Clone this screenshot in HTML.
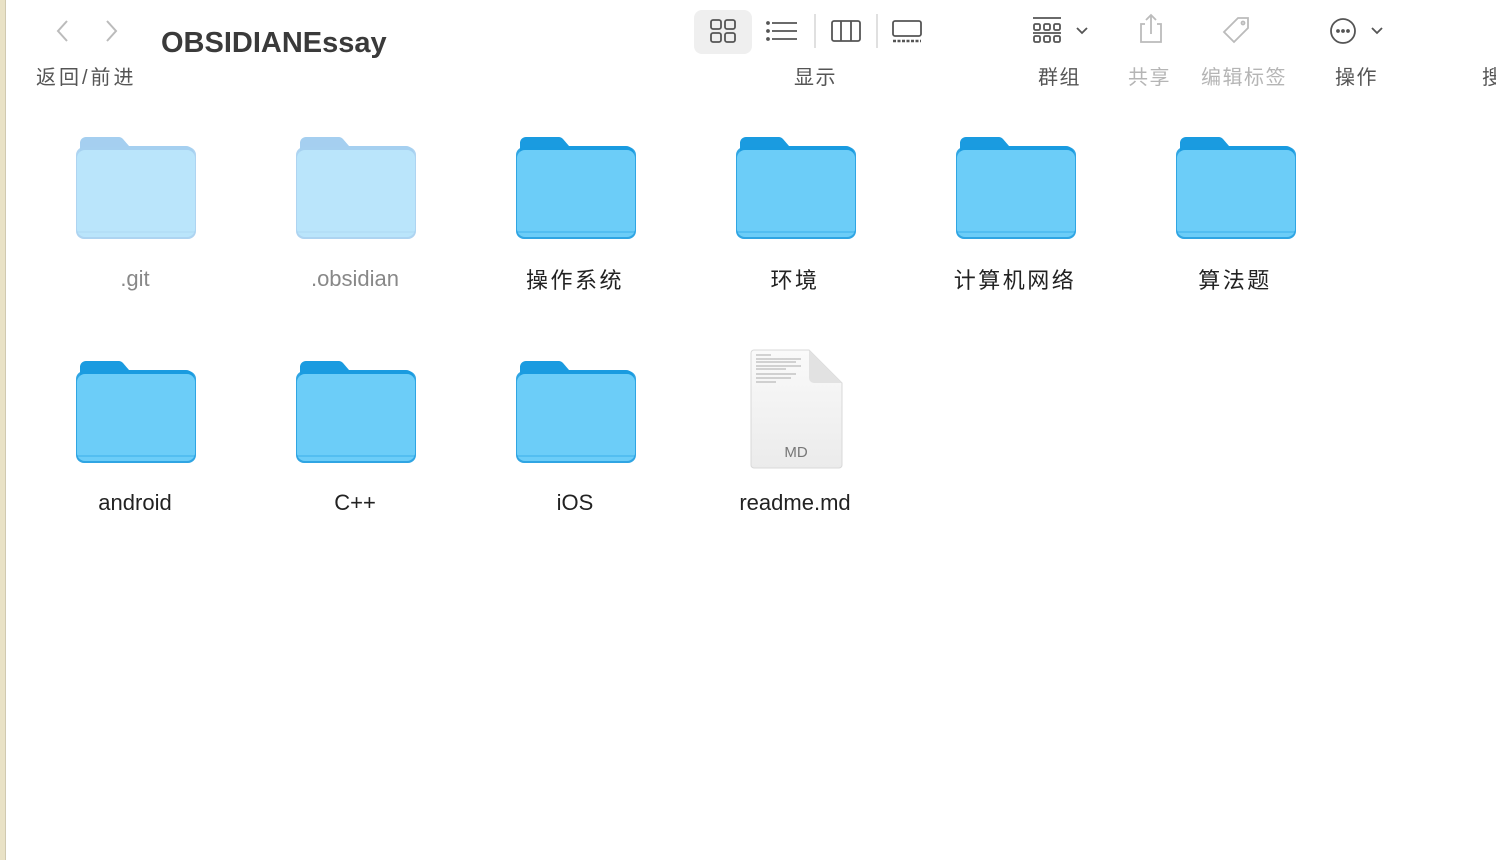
<!DOCTYPE html>
<html><head><meta charset="utf-8"><style>
body{margin:0;width:1496px;height:860px;background:#fff;position:relative;overflow:hidden;font-family:"Liberation Sans","Noto Sans CJK SC",sans-serif;}
.strip{position:absolute;left:0;top:0;width:5px;height:860px;background:#e9e2c6;border-right:1px solid #d0c9b0;}
.t{position:absolute;font-size:20px;color:#555;white-space:nowrap;letter-spacing:1.5px;}
.lbl{position:absolute;width:220px;text-align:center;font-size:22px;color:#222;white-space:nowrap;}
.c{letter-spacing:2.5px;top:263px!important}
.item{position:absolute;}
</style></head><body>
<div class="strip"></div>
<svg style="position:absolute;left:50px;top:18px" width="80" height="26"><path d="M17 3 L8 13 L17 23" fill="none" stroke="#bbb" stroke-width="2"/><path d="M57 3 L66 13 L57 23" fill="none" stroke="#bbb" stroke-width="2"/></svg>
<div class="t" style="left:36px;top:61px;letter-spacing:3px">返回/前进</div>
<div style="position:absolute;left:161px;top:27px;font-size:29px;font-weight:bold;color:#3a3a3a">OBSIDIANEssay</div>
<div style="position:absolute;left:694px;top:10px;width:58px;height:44px;background:#efefef;border-radius:8px"></div>
<svg style="position:absolute;left:690px;top:10px" width="250" height="44" fill="none" stroke="#555" stroke-width="1.8">
<rect x="21" y="10" width="10" height="9" rx="2"/><rect x="35" y="10" width="10" height="9" rx="2"/><rect x="21" y="23" width="10" height="9" rx="2"/><rect x="35" y="23" width="10" height="9" rx="2"/>
<path d="M82 13h25M82 21h25M82 29h25"/><circle cx="78" cy="13" r="1" fill="#555"/><circle cx="78" cy="21" r="1" fill="#555"/><circle cx="78" cy="29" r="1" fill="#555"/>
<path d="M125 4v34" stroke="#ddd"/>
<rect x="142" y="11" width="28" height="20" rx="2"/><path d="M151 11v20M161 11v20"/>
<path d="M187 4v34" stroke="#ddd"/>
<rect x="203" y="11" width="28" height="15" rx="2"/><path d="M203 31h28" stroke-dasharray="3 1.5" stroke-width="2.5"/>
</svg>
<div class="t" style="left:794px;top:61px">显示</div>
<svg style="position:absolute;left:1025px;top:10px" width="380" height="44" fill="none" stroke="#555" stroke-width="1.8">
<path d="M8 8h28"/><rect x="9" y="14" width="6" height="6" rx="1.5"/><rect x="19" y="14" width="6" height="6" rx="1.5"/><rect x="29" y="14" width="6" height="6" rx="1.5"/><path d="M8 23h28"/><rect x="9" y="26" width="6" height="6" rx="1.5"/><rect x="19" y="26" width="6" height="6" rx="1.5"/><rect x="29" y="26" width="6" height="6" rx="1.5"/>
<path d="M52 18l5 5l5-5"/>
<g stroke="#bbb"><path d="M120 14h-4v18h20v-18h-4M126 24v-18M121 10l5-5l5 5"/>
<path d="M213 8h10v10l-14 14l-10-10z"/><circle cx="218" cy="13" r="1.5"/></g>
<circle cx="318" cy="21" r="12"/><circle cx="313" cy="21" r="1" fill="#555"/><circle cx="318" cy="21" r="1" fill="#555"/><circle cx="323" cy="21" r="1" fill="#555"/>
<path d="M347 18l5 5l5-5"/>
<path d="M477 12a10 10 0 0 0 -5 12" stroke="#555"/>
</svg>
<div class="t" style="left:1038px;top:61px">群组</div>
<div class="t" style="left:1128px;top:61px;color:#b5b5b5">共享</div>
<div class="t" style="left:1201px;top:61px;color:#b5b5b5">编辑标签</div>
<div class="t" style="left:1335px;top:61px">操作</div>
<div class="t" style="left:1482px;top:61px">搜索</div>
<svg width="0" height="0" style="position:absolute"><defs>
<symbol id="f" viewBox="0 0 120 102"><path d="M4 6 a6 6 0 0 1 6-6 h32 a6 6 0 0 1 5 2 l6 7 h57 a8 8 0 0 1 8 8 v70 H4z" fill="var(--d)"/><rect x="0" y="10" width="120" height="92" rx="8" fill="var(--d)" opacity="0.9"/><rect x="1" y="13" width="118" height="87" rx="8" fill="var(--m)"/><rect x="1" y="94" width="118" height="2" fill="var(--d)" opacity="0.3"/></symbol></defs></svg>
<svg class="item" style="left:76px;top:137px;--d:#a5cff0;--m:#bae5fb" width="120" height="102"><use href="#f"/></svg>
<svg class="item" style="left:296px;top:137px;--d:#a5cff0;--m:#bae5fb" width="120" height="102"><use href="#f"/></svg>
<svg class="item" style="left:516px;top:137px;--d:#1a9be0;--m:#6ccdf8" width="120" height="102"><use href="#f"/></svg>
<svg class="item" style="left:736px;top:137px;--d:#1a9be0;--m:#6ccdf8" width="120" height="102"><use href="#f"/></svg>
<svg class="item" style="left:956px;top:137px;--d:#1a9be0;--m:#6ccdf8" width="120" height="102"><use href="#f"/></svg>
<svg class="item" style="left:1176px;top:137px;--d:#1a9be0;--m:#6ccdf8" width="120" height="102"><use href="#f"/></svg>
<svg class="item" style="left:76px;top:361px;--d:#1a9be0;--m:#6ccdf8" width="120" height="102"><use href="#f"/></svg>
<svg class="item" style="left:296px;top:361px;--d:#1a9be0;--m:#6ccdf8" width="120" height="102"><use href="#f"/></svg>
<svg class="item" style="left:516px;top:361px;--d:#1a9be0;--m:#6ccdf8" width="120" height="102"><use href="#f"/></svg>
<svg class="item" style="left:746px;top:349px" width="100" height="122">
<defs><linearGradient id="g" x1="0" y1="0" x2="0" y2="1"><stop offset="0" stop-color="#fafafa"/><stop offset="1" stop-color="#ebebeb"/></linearGradient></defs>
<path d="M5 4 a3 3 0 0 1 3-3 h55 l33 33 v82 a3 3 0 0 1-3 3 h-85 a3 3 0 0 1-3-3z" fill="url(#g)" stroke="#d8d8d8"/>
<path d="M63 1 v28 a5 5 0 0 0 5 5 h28z" fill="#e2e2e2"/>
<g stroke="#aaa" stroke-width="1"><path d="M10 6h15M10 10h45M10 13h40M10 17h45M10 20h30M10 25h40M10 29h35M10 33h20"/></g>
<text x="50" y="108" text-anchor="middle" font-family="Liberation Sans" font-size="15" fill="#777">MD</text>
</svg>
<div class="lbl" style="left:25px;top:266px;color:#888">.git</div>
<div class="lbl" style="left:245px;top:266px;color:#888">.obsidian</div>
<div class="lbl c" style="left:465px;top:266px">操作系统</div>
<div class="lbl c" style="left:685px;top:266px">环境</div>
<div class="lbl c" style="left:905px;top:266px">计算机网络</div>
<div class="lbl c" style="left:1125px;top:266px">算法题</div>
<div class="lbl" style="left:25px;top:490px">android</div>
<div class="lbl" style="left:245px;top:490px">C++</div>
<div class="lbl" style="left:465px;top:490px">iOS</div>
<div class="lbl" style="left:685px;top:490px">readme.md</div>
</body></html>
